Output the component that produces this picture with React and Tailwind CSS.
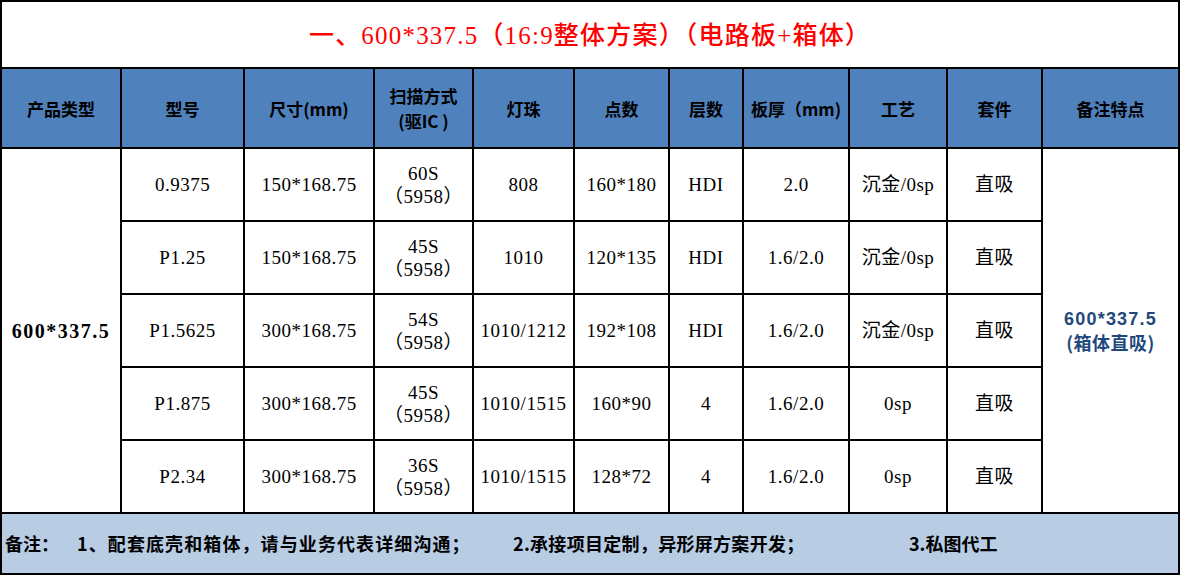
import React from "react";

const rows = [
  ["0.9375", "150*168.75", "60S", "808", "160*180", "HDI", "2.0", "沉金/0sp", "直吸"],
  ["P1.25", "150*168.75", "45S", "1010", "120*135", "HDI", "1.6/2.0", "沉金/0sp", "直吸"],
  ["P1.5625", "300*168.75", "54S", "1010/1212", "192*108", "HDI", "1.6/2.0", "沉金/0sp", "直吸"],
  ["P1.875", "300*168.75", "45S", "1010/1515", "160*90", "4", "1.6/2.0", "0sp", "直吸"],
  ["P2.34", "300*168.75", "36S", "1010/1515", "128*72", "4", "1.6/2.0", "0sp", "直吸"],
];

const headers = ["产品类型", "型号", "尺寸(mm)", null, "灯珠", "点数", "层数", "板厚（mm)", "工艺", "套件", "备注特点"];

export default function App() {
  return (
    <div className="w-[1180px] h-[575px] bg-white">
      <div className="grid w-[1180px] h-[575px] bg-black p-[2px] gap-[2px] grid-cols-[118px_121px_128px_97px_99px_93px_72px_104px_96px_93px_135px] grid-rows-[65px_78px_71px_71px_71px_71px_71px_59px]">
        <div className="col-span-11 bg-white flex items-center justify-center pt-[2px] font-['Liberation_Serif','Noto_Sans_CJK_SC',serif] font-medium text-[25px] text-[#ff0000] tracking-[1.2px]">
          一、600*337.5（16:9整体方案）（电路板+箱体）
        </div>
        {headers.map((h, i) => (
          <div
            key={i}
            className="bg-[#4f81bd] flex flex-col items-center justify-center text-center font-['Noto_Sans_CJK_SC','Liberation_Sans',sans-serif] font-bold text-[17px] leading-[25px] text-black"
          >
            {h === null ? (
              <>
                <span>扫描方式</span>
                <span>(驱IC )</span>
              </>
            ) : (
              <span>{h}</span>
            )}
          </div>
        ))}
        <div className="row-span-5 bg-white flex items-center justify-center font-['Liberation_Serif','Noto_Sans_CJK_SC',serif] font-bold text-[20px] tracking-[1.5px] text-black">
          600*337.5
        </div>
        {rows.map((r, ri) => (
          <React.Fragment key={ri}>
            {r.map((c, ci) => (
              <div
                key={ci}
                className="bg-white flex flex-col items-center justify-center text-center font-['Liberation_Serif','Noto_Sans_CJK_SC',serif] text-[19px] tracking-[0.5px] leading-[23px] text-black"
              >
                {ci === 2 ? (
                  <>
                    <span>{c}</span>
                    <span>（5958）</span>
                  </>
                ) : (
                  <span>{c}</span>
                )}
              </div>
            ))}
            {ri === 0 && (
              <div className="row-span-5 bg-white flex flex-col items-center justify-center text-center font-['Liberation_Sans','Noto_Sans_CJK_SC',sans-serif] font-bold text-[18px] leading-[23px] tracking-[1.2px] text-[#1f497d]">
                <span>600*337.5</span>
                <span className="font-['Noto_Sans_CJK_SC',sans-serif] tracking-[0.5px]">(箱体直吸)</span>
              </div>
            )}
          </React.Fragment>
        ))}
        <div className="col-span-11 bg-[#b8cce4] flex items-center font-['Noto_Sans_CJK_SC','Liberation_Sans',sans-serif] font-bold text-[18px] text-black whitespace-nowrap">
          <span className="w-[75px] pl-[3px]">备注：</span>
          <span className="w-[436px] tracking-[1.1px]">1、配套底壳和箱体，请与业务代表详细沟通；</span>
          <span className="w-[396px] tracking-[0.3px]">2.承接项目定制，异形屏方案开发；</span>
          <span>3.私图代工</span>
        </div>
      </div>
    </div>
  );
}
